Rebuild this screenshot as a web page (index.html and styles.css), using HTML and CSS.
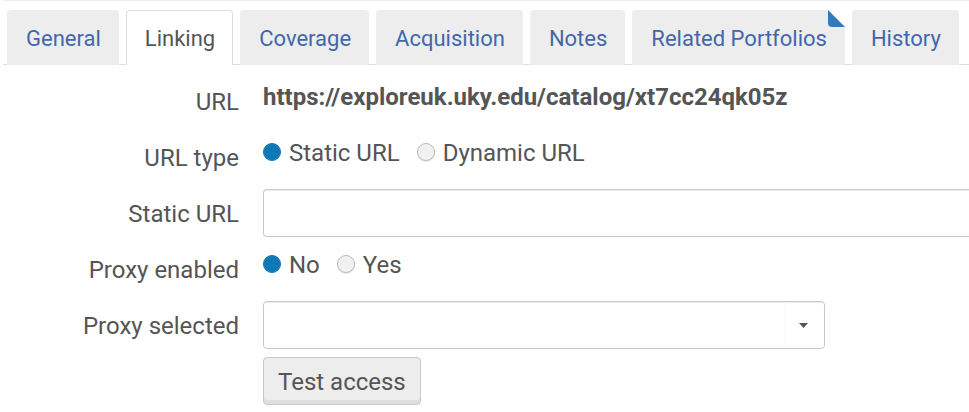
FILE: index.html
```html
<!DOCTYPE html>
<html lang="en">
<head>
<meta charset="utf-8">
<title>Portfolio linking</title>
<link rel="stylesheet" href="styles.css">
</head>
<body>
<main class="panel">
  <nav class="tabs" aria-label="Portfolio sections">
    <a class="tab" href="#general">General</a>
    <a class="tab tab-active" href="#linking" aria-current="page">Linking</a>
    <a class="tab" href="#coverage">Coverage</a>
    <a class="tab" href="#acquisition">Acquisition</a>
    <a class="tab" href="#notes">Notes</a>
    <a class="tab tab-folded" href="#related">Related Portfolios<svg class="fold" viewBox="0 0 17 17" aria-hidden="true"><path fill="#fff" d="M0 0H17V17Z"/><path fill="#337ab7" d="M0 0L17 17H4Q0 17 0 13Z"/></svg></a>
    <a class="tab" href="#history">History</a>
  </nav>
  <form class="form">
    <div class="row">
      <span class="label">URL</span>
      <strong class="value">https://exploreuk.uky.edu/catalog/xt7cc24qk05z</strong>
    </div>
    <div class="row" role="radiogroup" aria-labelledby="type-label">
      <span class="label" id="type-label">URL type</span>
      <div class="value options">
        <label class="option"><input class="radio" type="radio" name="type" checked>Static URL</label>
        <label class="option"><input class="radio" type="radio" name="type">Dynamic URL</label>
      </div>
    </div>
    <div class="row">
      <label class="label" for="static-url">Static URL</label>
      <input class="field field-wide" id="static-url" type="text">
    </div>
    <div class="row" role="radiogroup" aria-labelledby="proxy-label">
      <span class="label" id="proxy-label">Proxy enabled</span>
      <div class="value options">
        <label class="option"><input class="radio" type="radio" name="proxy" checked>No</label>
        <label class="option"><input class="radio" type="radio" name="proxy">Yes</label>
      </div>
    </div>
    <div class="row">
      <label class="label" for="proxy">Proxy selected</label>
      <div class="select-wrap">
        <select class="field" id="proxy"><option value=""></option></select>
        <svg class="caret" viewBox="0 0 40 46" aria-hidden="true"><path fill="#f8f8f8" d="M0 0H1V46H0Z"/><path fill="#555" d="M15 21H24L19.500 26Z"/></svg>
      </div>
    </div>
    <div class="row">
      <button class="button" type="button">Test access</button>
    </div>
  </form>
</main>
</body>
</html>
```
FILE: styles.css
```css
* {
  box-sizing: border-box;
}

body {
  margin: 0;
  background: #fff;
  color: #555;
  font-family: Roboto, sans-serif;
  font-size: 24px;
  line-height: 28px;
}

.panel {
  margin-left: 3px;
  border-top: 1px solid #eee;
  overflow: hidden;
}

.tabs {
  display: flex;
  gap: 7px;
  margin-top: 9px;
  padding-left: 4px;
  border-bottom: 1px solid #ddd;
}

.tab {
  flex: none;
  height: 55px;
  margin-bottom: -1px;
  padding: 15px 18px 12px 19px;
  border-radius: 4px 4px 0 0;
  background: #ededed;
  color: #4267ae;
  font-size: 22px;
  text-decoration: none;
}

.tab-active {
  padding: 14px 17px 12px 18px;
  border: 1px solid #ddd;
  border-bottom: 0;
  background: #fff;
  color: #555;
}

.tab-folded {
  position: relative;
}

.fold {
  position: absolute;
  top: 0;
  right: 0;
  width: 17px;
  height: 17px;
}

.form {
  display: grid;
  gap: 8px;
  margin-top: 12px;
}

.row {
  display: grid;
  grid-template-columns: 236px 1fr;
  column-gap: 24px;
  height: 48px;
}

.label {
  padding-top: 11px;
  text-align: right;
}

.value {
  padding-top: 6px;
}

.options {
  display: flex;
  gap: 17px;
}

.option {
  display: flex;
  gap: 8px;
}

.radio {
  appearance: none;
  width: 18px;
  height: 18px;
  margin: 4px 0 0;
  border: 1px solid #bbb;
  border-radius: 50%;
  background: #f1f1f1;
  box-shadow: 0 1px 1px #e4e4e4;
}

.radio:checked {
  border-color: #0f79b8;
  background: #0f79b8;
  box-shadow: none;
}

.field {
  appearance: none;
  width: 100%;
  height: 48px;
  padding: 0 12px;
  border: 1px solid #c8c8c8;
  border-radius: 4px;
  background: #fff;
  box-shadow: inset 0 2px 1px -1px #eee;
  color: inherit;
  font: inherit;
}

.field-wide {
  border-right: 0;
  border-radius: 4px 0 0 4px;
}

.select-wrap {
  position: relative;
  max-width: 562px;
}

.caret {
  position: absolute;
  top: 1px;
  right: 1px;
  width: 40px;
  height: 46px;
  pointer-events: none;
}

.button {
  grid-column: 2;
  justify-self: start;
  padding: 2px 14px 0;
  border: 1px solid #c8c8c8;
  border-radius: 4px;
  background: #ededed;
  box-shadow: inset 0 -4px 0 #dfdfdf;
  color: inherit;
  font: inherit;
}
```
